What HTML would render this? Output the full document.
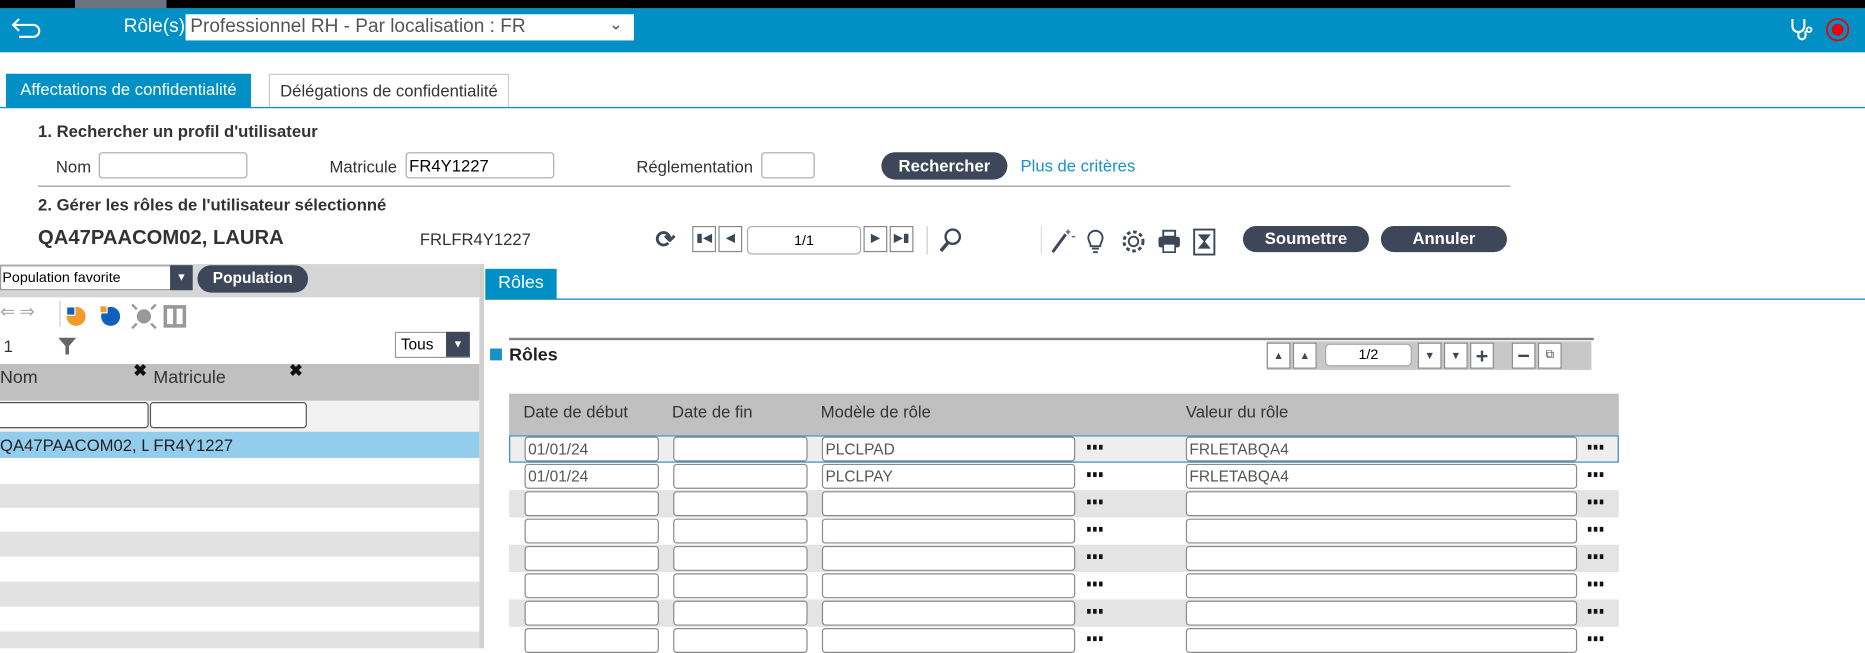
<!DOCTYPE html>
<html><head><meta charset="utf-8"><style>
html,body{margin:0;padding:0;width:1865px;height:648px;overflow:hidden;background:#fff}
#w{position:absolute;left:0;top:0;width:1568px;height:545px;transform:scale(1.18941);transform-origin:0 0;font-family:"Liberation Sans",sans-serif;color:#333;font-size:13px}
.a{position:absolute}
.n{font-family:"Liberation Sans Narrow","Liberation Sans",sans-serif}
.inp{position:absolute;background:#fff;border:1px solid #aaa;border-radius:3px;box-sizing:border-box}
.btn{position:absolute;background:#3d4759;color:#fff;font-weight:bold;border-radius:12px;text-align:center;box-sizing:border-box}
.nb{position:absolute;background:#fff;border:1px solid #888;box-sizing:border-box;height:22px;width:20px;font-size:10px;text-align:center;line-height:20px;color:#3d4759}
.ri{position:absolute;height:21px;background:#fff;border:1px solid #8a8a8a;border-radius:3px;box-sizing:border-box;font-size:13px;color:#555;padding-left:2px;line-height:19px}
.dots{position:absolute;font-weight:bold;font-size:12px;color:#111;letter-spacing:-1px}
</style></head><body><div id="w">
<div class="a" style="left:0;top:0;width:1568px;height:7px;background:#000"></div>
<div class="a" style="left:63px;top:0;width:77px;height:7px;background:#6b7280"></div>
<div class="a" style="left:0;top:7px;width:1568px;height:37px;background:#0090c6"></div>
<svg class="a" style="left:8px;top:13px" width="30" height="20" viewBox="0 0 30 20"><path d="M8 3 L3 8 L8 13 M3 8 H20 a5 5 0 0 1 0 10 H8" fill="none" stroke="#fff" stroke-width="1.8"/></svg>
<div class="a n" style="left:104px;top:14px;color:#fff;font-size:16px">Rôle(s)</div>
<div class="a" style="left:156px;top:12px;width:377px;height:22px;background:#fff"></div>
<div class="a n" style="left:160px;top:14px;font-size:16px;color:#555">Professionnel RH - Par localisation : FR</div>
<div class="a" style="left:512px;top:12px;font-size:14px;color:#555">&#8964;</div>
<svg class="a" style="left:1504px;top:13px" width="52" height="24" viewBox="0 0 52 24"><path d="M3 3 V9 a5 5 0 0 0 10 0 V3 M8 14 V17 a3 3 0 0 0 6 0 V13" fill="none" stroke="#fff" stroke-width="1.8"/><circle cx="17" cy="12" r="2" fill="none" stroke="#fff" stroke-width="1.5"/><circle cx="41" cy="12" r="9" fill="none" stroke="#e00" stroke-width="1.5"/><circle cx="41" cy="12" r="5" fill="#e00"/></svg>
<div class="a" style="left:5px;top:62px;width:206px;height:28px;background:#0090c6;color:#fff;font-size:14px;line-height:27px;text-align:center"><span class="n">Affectations de confidentialité</span></div>
<div class="a" style="left:226px;top:62px;width:202px;height:28px;border:1px solid #ccc;border-bottom:none;box-sizing:border-box;font-size:14px;line-height:26px;text-align:center;color:#333"><span class="n">Délégations de confidentialité</span></div>
<div class="a" style="left:0;top:90px;width:1568px;height:1px;background:#0090c6"></div>
<div class="a n" style="left:32px;top:102px;font-weight:bold;font-size:14px">1. Rechercher un profil d'utilisateur</div>
<div class="a n" style="left:47px;top:132px;font-size:14px">Nom</div>
<div class="inp" style="left:83px;top:128px;width:125px;height:22px"></div>
<div class="a n" style="left:277px;top:132px;font-size:14px">Matricule</div>
<div class="inp" style="left:341px;top:128px;width:125px;height:22px"></div>
<div class="a n" style="left:344px;top:131px;font-size:14px;color:#000">FR4Y1227</div>
<div class="a n" style="left:535px;top:132px;font-size:14px">Réglementation</div>
<div class="inp" style="left:640px;top:128px;width:45px;height:22px"></div>
<div class="btn n" style="left:741px;top:128px;width:106px;height:23px;line-height:22px;font-size:14px">Rechercher</div>
<div class="a n" style="left:858px;top:131px;font-size:14px;color:#1a8fd0">Plus de critères</div>
<div class="a" style="left:32px;top:156px;width:1238px;height:1px;background:#999"></div>
<div class="a n" style="left:32px;top:164px;font-weight:bold;font-size:14px">2. Gérer les rôles de l'utilisateur sélectionné</div>
<div class="a" style="left:32px;top:190px;font-weight:bold;font-size:17px;color:#333">QA47PAACOM02, LAURA</div>
<div class="a n" style="left:353px;top:193px;font-size:14px">FRLFR4Y1227</div>
<div class="a" style="left:551px;top:189px;font-size:20px;font-weight:bold;color:#3d4759">&#10227;</div>
<div class="nb" style="left:582px;top:190px">&#9646;&#9664;</div>
<div class="nb" style="left:604px;top:190px">&#9664;</div>
<div class="inp" style="left:628px;top:190px;width:96px;height:24px;border-radius:4px;text-align:center;font-size:12px;line-height:22px;color:#000">1/1</div>
<div class="nb" style="left:726px;top:190px">&#9654;</div>
<div class="nb" style="left:748px;top:190px">&#9654;&#9646;</div>
<div class="a" style="left:779px;top:190px;width:1px;height:24px;background:#ccc"></div>
<svg class="a" style="left:788px;top:190px" width="22" height="24"><circle cx="13" cy="9" r="6" fill="none" stroke="#3d4759" stroke-width="2"/><path d="M9 14 L3 21" stroke="#3d4759" stroke-width="3"/></svg>
<div class="a" style="left:875px;top:190px;width:1px;height:24px;background:#ddd"></div>
<svg class="a" style="left:882px;top:190px" width="145" height="26"><path d="M3 22 L14 7" stroke="#3d4759" stroke-width="2.5"/><path d="M16 3 v4 M14 5 h4 M19 9 h3" stroke="#3d4759"/><path d="M39 4 a6 6 0 0 1 6 6 c0 3 -2 4 -2 7 h-8 c0 -3 -2 -4 -2 -7 a6 6 0 0 1 6 -6z M36 19 h6 M37 22 h4" fill="none" stroke="#3d4759" stroke-width="1.6"/><circle cx="71" cy="13" r="4" fill="none" stroke="#3d4759" stroke-width="1.6"/><circle cx="71" cy="13" r="8" fill="none" stroke="#3d4759" stroke-width="2.5" stroke-dasharray="3 2.3"/><rect x="96" y="4" width="10" height="5" fill="none" stroke="#3d4759" stroke-width="1.6"/><rect x="92" y="9" width="18" height="9" rx="2" fill="#3d4759"/><rect x="96" y="15" width="10" height="7" fill="#fff" stroke="#3d4759" stroke-width="1.4"/><rect x="122" y="3" width="17" height="21" fill="none" stroke="#3d4759" stroke-width="1.6"/><path d="M125 7 h11 l-5 6 l5 6 h-11 l5 -6z" fill="#3d4759"/></svg>
<div class="btn n" style="left:1045px;top:190px;width:106px;height:22px;line-height:21px;font-size:14px">Soumettre</div>
<div class="btn n" style="left:1161px;top:190px;width:106px;height:22px;line-height:21px;font-size:14px">Annuler</div>

<div class="a" style="left:0;top:222px;width:403px;height:28px;background:#d6d6d6"></div>
<div class="a" style="left:0;top:223px;width:162px;height:21px;background:#fff;border:1px solid #999;box-sizing:border-box;font-size:12px;color:#000;line-height:19px;padding-left:1px">Population favorite</div>
<div class="a" style="left:143px;top:223px;width:19px;height:21px;background:#3d4759;color:#fff;font-size:9px;text-align:center;line-height:21px">&#9660;</div>
<div class="btn" style="left:166px;top:223px;width:93px;height:23px;line-height:22px;font-size:13px">Population</div>
<div class="a" style="left:0;top:253px;width:60px;height:30px;color:#aaa;font-size:15px;letter-spacing:4px">&#8656;&#8658;</div>
<div class="a" style="left:50px;top:253px;width:1px;height:22px;background:#ccc"></div>
<svg class="a" style="left:53px;top:253px" width="110" height="24"><circle cx="11" cy="13" r="8" fill="#f39a2b"/><rect x="3" y="5" width="7" height="7" fill="#1060c0" stroke="#fff"/><circle cx="40" cy="13" r="8" fill="#1060c0"/><rect x="31" y="4" width="6" height="6" fill="#f39a2b" stroke="#fff"/><circle cx="68" cy="13" r="6" fill="#999"/><path d="M58 3 l4 4 M78 3 l-4 4 M58 23 l4 -4 M78 23 l-4 -4" stroke="#999" stroke-width="2"/><rect x="86" y="5" width="16" height="16" fill="none" stroke="#999" stroke-width="3"/><path d="M94 5 v16" stroke="#999" stroke-width="3"/></svg>
<div class="a" style="left:3px;top:283px;font-size:14px">1</div>
<svg class="a" style="left:48px;top:283px" width="18" height="16"><path d="M1 1 h15 l-6 7 v7 h-3 v-7z" fill="#666"/></svg>
<div class="a" style="left:332px;top:279px;width:63px;height:22px;background:#fff;border:1px solid #999;box-sizing:border-box;font-size:13px;line-height:20px;padding-left:4px;color:#000">Tous</div>
<div class="a" style="left:375px;top:279px;width:20px;height:21px;background:#3d4759;color:#fff;font-size:9px;text-align:center;line-height:21px">&#9660;</div>
<div class="a" style="left:0;top:306px;width:403px;height:31px;background:#c0c0c0"></div>
<div class="a" style="left:0;top:309px;font-size:15px">Nom</div>
<div class="a" style="left:112px;top:303px;font-size:14px;font-weight:bold;color:#111">&#10006;</div>
<div class="a" style="left:129px;top:309px;font-size:15px">Matricule</div>
<div class="a" style="left:243px;top:303px;font-size:14px;font-weight:bold;color:#111">&#10006;</div>
<div class="a" style="left:0;top:337px;width:403px;height:26px;background:#f2f2f2"></div>
<div class="a" style="left:-4px;top:338px;width:129px;height:22px;background:#fff;border:1px solid #555;border-radius:3px;box-sizing:border-box"></div>
<div class="a" style="left:126px;top:338px;width:132px;height:22px;background:#fff;border:1px solid #555;border-radius:3px;box-sizing:border-box"></div>
<div class="a" style="left:0;top:363px;width:403px;height:22px;background:#93cdee"></div>
<div class="a" style="left:0;top:366px;width:125px;overflow:hidden;white-space:nowrap;font-size:14px;color:#222">QA47PAACOM02, LAURA</div>
<div class="a" style="left:129px;top:366px;font-size:14px;color:#222">FR4Y1227</div>
<div class="a" style="left:0;top:407px;width:403px;height:20px;background:#e2e2e2"></div>
<div class="a" style="left:0;top:447px;width:403px;height:21px;background:#e2e2e2"></div>
<div class="a" style="left:0;top:489px;width:403px;height:21px;background:#e2e2e2"></div>
<div class="a" style="left:0;top:531px;width:403px;height:14px;background:#e2e2e2"></div>
<div class="a" style="left:403px;top:222px;width:4px;height:323px;background:#d0d0d0"></div>

<div class="a n" style="left:408px;top:226px;width:60px;height:25px;background:#0090c6;color:#fff;font-size:15px;line-height:24px;text-align:center">Rôles</div>
<div class="a" style="left:408px;top:251px;width:1160px;height:1px;background:#0080b0"></div>
<div class="a" style="left:428px;top:284px;width:912px;height:2px;background:#808080"></div>
<div class="a" style="left:412px;top:293px;width:10px;height:10px;background:#1a90c8"></div>
<div class="a n" style="left:428px;top:290px;font-weight:bold;font-size:15px;color:#222">Rôles</div>
<div class="a" style="left:1065px;top:287px;width:273px;height:24px;background:#c8c8c8"></div>
<div class="nb" style="left:1065px;top:288px;height:22px;font-size:9px">&#9650;</div>
<div class="nb" style="left:1087px;top:288px;height:22px;font-size:9px">&#9650;</div>
<div class="inp" style="left:1114px;top:289px;width:73px;height:19px;border-radius:4px;text-align:center;font-size:12px;line-height:17px;color:#000">1/2</div>
<div class="nb" style="left:1192px;top:288px;height:22px;font-size:9px">&#9660;</div>
<div class="nb" style="left:1214px;top:288px;height:22px;font-size:9px">&#9660;</div>
<div class="nb" style="left:1236px;top:288px;height:22px;font-size:18px;font-weight:bold">+</div>
<div class="nb" style="left:1271px;top:288px;height:22px;font-size:18px;font-weight:bold">&#8722;</div>
<div class="nb" style="left:1293px;top:288px;height:22px;font-size:10px">&#10697;</div>
<div class="a" style="left:428px;top:331px;width:933px;height:35px;background:#c0c0c0"></div>
<div class="a n" style="left:440px;top:338px;font-size:14px">Date de début</div>
<div class="a n" style="left:565px;top:338px;font-size:14px">Date de fin</div>
<div class="a n" style="left:690px;top:338px;font-size:14px">Modèle de rôle</div>
<div class="a n" style="left:997px;top:338px;font-size:14px">Valeur du rôle</div>
<div class="a" style="left:428px;top:366px;width:933px;height:23px;background:#eee;border:1px solid #2d8fc0;box-sizing:border-box"></div>
<div class="a" style="left:428px;top:412px;width:933px;height:23px;background:#e4e4e4"></div>
<div class="a" style="left:428px;top:458px;width:933px;height:23px;background:#e4e4e4"></div>
<div class="a" style="left:428px;top:504px;width:933px;height:23px;background:#e4e4e4"></div>
<div id="rows"></div>
<script>
var h='',ys=[367,390,413,436,459,482,505,528];
var d=[['01/01/24','PLCLPAD','FRLETABQA4'],['01/01/24','PLCLPAY','FRLETABQA4']];
var dt='<span style="display:inline-block;width:3px;height:4px;background:#111;margin-right:2px;vertical-align:middle"></span>';
ys.forEach(function(y,i){var r=d[i]||['','',''];
h+='<div class="ri n" style="left:441px;top:'+y+'px;width:113px">'+r[0]+'</div>'+
'<div class="ri" style="left:566px;top:'+y+'px;width:113px"></div>'+
'<div class="ri n" style="left:691px;top:'+y+'px;width:213px">'+r[1]+'</div>'+
'<div class="dots" style="left:914px;top:'+(y+1)+'px">'+dt+dt+dt+'</div>'+
'<div class="ri n" style="left:997px;top:'+y+'px;width:329px">'+r[2]+'</div>'+
'<div class="dots" style="left:1335px;top:'+(y+1)+'px">'+dt+dt+dt+'</div>';});
document.getElementById('rows').innerHTML=h;
</script>
</div></body></html>
